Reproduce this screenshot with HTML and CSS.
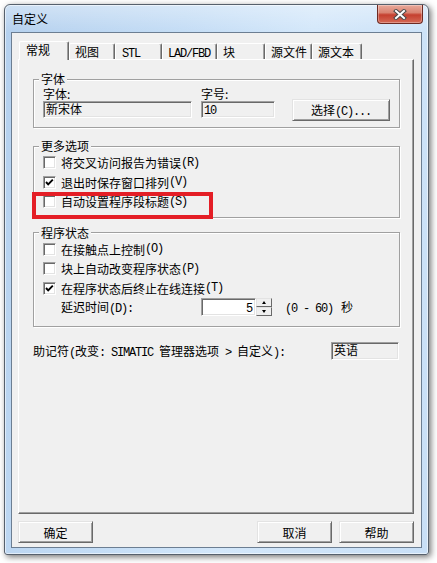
FILE: index.html
```html
<!DOCTYPE html>
<html lang="zh-CN">
<head>
    <meta charset="UTF-8">
    <title>自定义</title>
    <link rel="stylesheet" href="styles.css">
</head>
<body>

    <div class="window">
        <!-- Title bar -->
        <div class="titlebar">
            <span class="title">自定义</span>
            <div class="close">
                <svg width="16" height="11" viewBox="0 0 16 11">
                    <path d="M4 2 L12 9 M12 2 L4 9" stroke="#4a4a4a" stroke-width="4" stroke-linecap="square"/>
                    <path d="M4 2 L12 9 M12 2 L4 9" stroke="#ffffff" stroke-width="2" stroke-linecap="square"/>
                </svg>
            </div>
        </div>

        <div class="client">
            <!-- Tabs -->
            <div class="tabs">
                <div class="tab active t-general">常规</div>
                <div class="tab t-view">视图</div>
                <div class="tab t-stl"><span class="en">STL</span></div>
                <div class="tab t-lad"><span class="en">LAD/FBD</span></div>
                <div class="tab t-block">块</div>
                <div class="tab t-src">源文件</div>
                <div class="tab t-text">源文本</div>
            </div>

            <div class="pane">
                <!-- Font -->
                <fieldset class="group g-font">
                    <legend>字体</legend>
                    <div class="font-row">
                        <div class="field f-name">
                            <span class="label">字体:</span>
                            <div class="edit">新宋体</div>
                        </div>
                        <div class="field f-size">
                            <span class="label">字号:</span>
                            <div class="edit"><span class="en">10</span></div>
                        </div>
                        <button class="btn choose">选择<span class="en">(C)...</span></button>
                    </div>
                </fieldset>

                <!-- More options -->
                <fieldset class="group g-more">
                    <legend>更多选项</legend>
                    <div class="check"><span class="box"></span>将交叉访问报告为错误<span class="en">(R)</span></div>
                    <div class="check"><span class="box checked"><svg width="11" height="11" viewBox="0 0 11 11"><path d="M2 5 L4.2 7.4 L8.8 2.6" fill="none" stroke="#000" stroke-width="1.9"/></svg></span>退出时保存窗口排列<span class="en">(V)</span></div>
                    <div class="check"><span class="box"></span>自动设置程序段标题<span class="en">(S)</span></div>
                </fieldset>

                <!-- Program status -->
                <fieldset class="group g-status">
                    <legend>程序状态</legend>
                    <div class="check"><span class="box"></span>在接触点上控制<span class="en">(O)</span></div>
                    <div class="check"><span class="box"></span>块上自动改变程序状态<span class="en">(P)</span></div>
                    <div class="check"><span class="box checked"><svg width="11" height="11" viewBox="0 0 11 11"><path d="M2 5 L4.2 7.4 L8.8 2.6" fill="none" stroke="#000" stroke-width="1.9"/></svg></span>在程序状态后终止在线连接<span class="en">(T)</span></div>
                    <div class="delay">
                        <span class="delay-label">延迟时间<span class="en">(D):</span></span>
                        <div class="edit spin-edit"><span class="en">5</span></div>
                        <div class="spin">
                            <div class="spin-btn"><span class="arrow up"></span></div>
                            <div class="spin-btn"><span class="arrow down"></span></div>
                        </div>
                        <span class="range"><span class="en">(0 - 60)</span><span class="unit">秒</span></span>
                    </div>
                </fieldset>

                <!-- Mnemonic -->
                <div class="mnemonic">
                    <span>助记符<span class="en">(</span>改变<span class="en">: SIMATIC </span>管理器选项<span class="en"> &gt; </span>自定义<span class="en">):</span></span>
                    <div class="edit lang">英语</div>
                </div>
            </div>

            <!-- Dialog buttons -->
            <div class="actions">
                <button class="btn ok">确定</button>
                <button class="btn">取消</button>
                <button class="btn">帮助</button>
            </div>
        </div>

        <!-- Red highlight drawn over the dialog -->
        <div class="highlight"></div>
    </div>

</body>
</html>
```

FILE: styles.css
```css
/* Global Styles */
* {
    box-sizing: border-box;
}

body {
    margin: 0;
    width: 437px;
    height: 563px;
    overflow: hidden;
    background: #ffffff;
    font-family: "Noto Sans CJK SC", sans-serif;
    font-size: 12px;
    color: #000;
}

.en {
    font-family: "Liberation Mono", monospace;
    font-size: 12px;
    letter-spacing: -1.2px;
}

/* Window frame */
.window {
    position: relative;
    display: flex;
    flex-direction: column;
    margin: 4px 0 0 4px;
    width: 425px;
    height: 551px;
    border: 1px solid #56606c;
    border-radius: 6px 6px 3px 3px;
    background:
        linear-gradient(to bottom, rgba(255, 255, 255, 0.35), rgba(255, 255, 255, 0) 28px),
        linear-gradient(100deg, #b4d0ee 0%, #c3dcf5 35%, #d3e7fa 60%, #c8dff6 100%);
    box-shadow: inset 0 0 0 1px rgba(255, 255, 255, 0.55), 2px 2px 6px rgba(0, 0, 0, 0.55);
}

.titlebar {
    display: flex;
    justify-content: space-between;
    height: 27px;
    padding: 0 5px 0 7px;
}

.title {
    margin-top: 7px;
    line-height: 14px;
}

.close {
    display: flex;
    justify-content: center;
    align-items: center;
    width: 46px;
    height: 19px;
    border: 1px solid #6d2a22;
    border-top: none;
    border-radius: 0 0 4px 4px;
    background: linear-gradient(to bottom, #e9a99a 0%, #d98472 42%, #c5402f 55%, #d56a56 100%);
    box-shadow: inset 0 0 0 1px rgba(255, 255, 255, 0.3);
}

.client {
    flex: 1;
    display: flex;
    flex-direction: column;
    margin: 0 6px 6px 6px;
    padding: 8px 7px 4px 6px;
    border: 1px solid #6c7e92;
    background: #f0f0f0;
}

/* Tabs */
.tabs {
    display: flex;
    align-items: flex-end;
    height: 18px;
    padding-left: 1px;
}

.tab {
    height: 16px;
    padding-left: 5px;
    line-height: 15px;
    white-space: nowrap;
    border: 1px solid #fff;
    border-bottom: none;
    border-right-color: #696969;
    border-radius: 2px 2px 0 0;
    box-shadow: inset -1px 0 #a0a0a0;
}

.tab.active {
    position: relative;
    z-index: 1;
    height: 19px;
    margin-bottom: -1px;
    padding-left: 6px;
    line-height: 16px;
    background: #f0f0f0;
}

.t-general { width: 50px; }
.t-view { width: 46px; }
.t-stl { width: 47px; padding-left: 6px; }
.t-lad { width: 55px; }
.t-block { width: 48px; }
.t-src { width: 47px; }
.t-text { width: 50px; }

.pane {
    flex: 1;
    padding: 12px 13px 0 14px;
    border: 1px solid;
    border-color: #fff #696969 #696969 #fff;
    box-shadow: inset -1px -1px #a0a0a0;
}

/* Group boxes */
.group {
    margin: 0;
    padding: 0 9px;
    min-width: 0;
    border: 1px solid #a0a0a0;
    box-shadow: inset 1px 1px #fff, 1px 1px #fff;
}

.group legend {
    height: 14px;
    margin-left: -4px;
    padding: 0 2px;
    line-height: 14px;
    background: #f0f0f0;
}

.g-font {
    padding-bottom: 6px;
}

.g-more {
    margin-top: 11px;
    padding-bottom: 5px;
}

.g-status {
    margin-top: 8px;
    padding-bottom: 9px;
}

.font-row {
    display: flex;
    align-items: flex-start;
}

.field {
    display: flex;
    flex-direction: column;
}

.field .label {
    height: 14px;
    margin-top: 1px;
    line-height: 14px;
}

.f-name { width: 149px; }
.f-size { width: 74px; margin-left: 9px; }

.edit {
    height: 17px;
    padding-left: 2px;
    line-height: 14px;
    background: #f0f0f0;
    border: 1px solid;
    border-color: #a0a0a0 #fff #fff #a0a0a0;
    box-shadow: inset 1px 1px #696969, inset -1px -1px #e3e3e3;
}

/* Buttons */
.btn {
    height: 22px;
    padding: 0;
    font-family: inherit;
    font-size: 12px;
    color: #000;
    background: #f0f0f0;
    border: 1px solid;
    border-color: #e3e3e3 #696969 #696969 #e3e3e3;
    box-shadow: inset 1px 1px #fff, inset -1px -1px #a0a0a0;
}

.choose {
    width: 98px;
    margin: 13px 0 0 17px;
}

/* Checkboxes */
.check {
    display: flex;
    align-items: center;
    height: 19.5px;
    white-space: nowrap;
}

.box {
    display: flex;
    justify-content: center;
    align-items: center;
    width: 13px;
    height: 13px;
    margin-right: 5px;
    background: #fff;
    border: 1px solid;
    border-color: #a0a0a0 #fff #fff #a0a0a0;
    box-shadow: inset 1px 1px #696969, inset -1px -1px #e3e3e3;
}

/* Delay row */
.delay {
    display: flex;
    align-items: center;
    height: 19px;
    margin-top: -0.5px;
}

.delay-label {
    width: 158px;
    padding-left: 18px;
}

.spin-edit {
    width: 55px;
    height: 18px;
    padding: 0 3px 0 0;
    text-align: right;
    line-height: 15px;
    background: #fff;
}

.spin {
    display: flex;
    flex-direction: column;
    width: 16px;
    height: 18px;
}

.spin-btn {
    display: flex;
    justify-content: center;
    align-items: center;
    height: 9px;
    background: #f0f0f0;
    border: 1px solid;
    border-color: #e3e3e3 #696969 #696969 #e3e3e3;
}

.arrow {
    width: 0;
    height: 0;
    border-left: 2.5px solid transparent;
    border-right: 2.5px solid transparent;
}

.arrow.up { border-bottom: 3px solid #000; }
.arrow.down { border-top: 3px solid #000; }

.range {
    margin-left: 13px;
}

.range .unit {
    margin-left: 8px;
}

/* Mnemonic */
.mnemonic {
    display: flex;
    justify-content: space-between;
    align-items: center;
    height: 18px;
    margin-top: 15px;
    white-space: nowrap;
}

.lang {
    width: 68px;
    height: 18px;
    margin-right: 1px;
}

/* Bottom buttons */
.actions {
    display: flex;
    gap: 7px;
    margin-top: 7px;
}

.actions .btn {
    width: 75px;
}

.actions .ok {
    margin-right: auto;
}

/* Red marker over the third option */
.highlight {
    position: absolute;
    left: 27px;
    top: 187px;
    width: 181px;
    height: 27px;
    border: 4px solid #e41e26;
}
```
